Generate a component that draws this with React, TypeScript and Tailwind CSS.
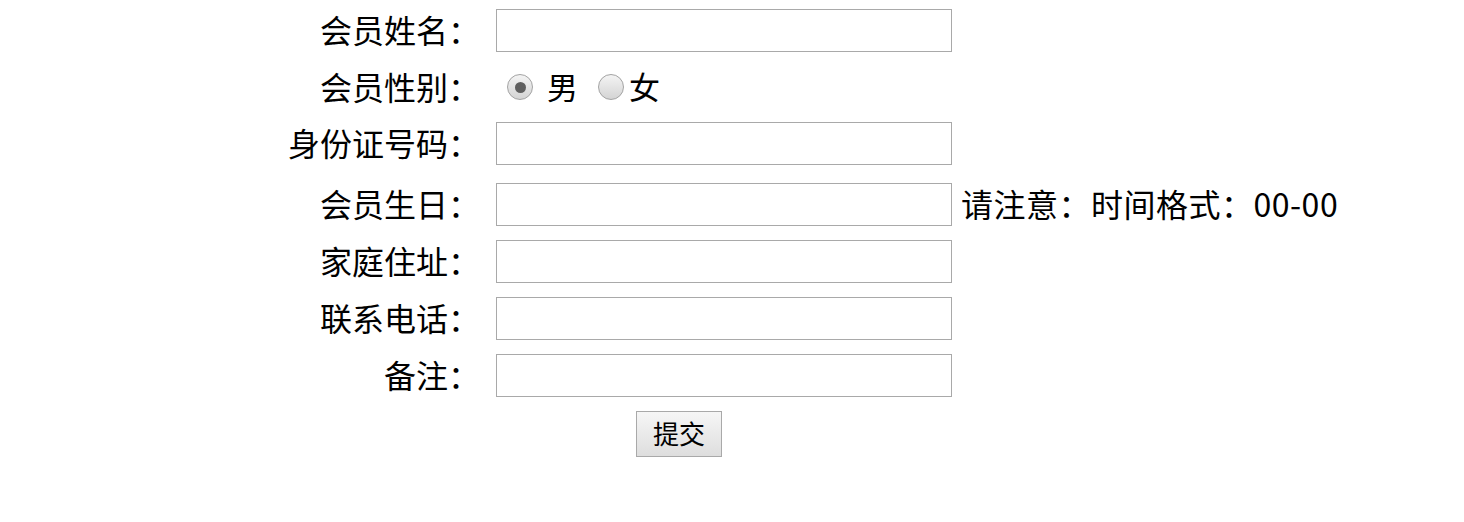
import type { ReactNode } from "react";

const font = { fontFamily: '"Noto Sans CJK SC", "Noto Sans", sans-serif' };

function Label({ children }: { children: ReactNode }) {
  return (
    <div className="w-[480px] shrink-0 pb-[3px] text-right text-[32px] leading-none text-black">
      {children}
    </div>
  );
}

function TextInput() {
  return (
    <input
      type="text"
      className="ml-[16px] h-[43px] w-[456px] shrink-0 border border-[#a9a9a9] bg-white px-1 outline-none"
    />
  );
}

function Radio({ checked }: { checked?: boolean }) {
  return (
    <span className="flex h-[26px] w-[26px] items-center justify-center rounded-full border border-[#a3a3a3] bg-gradient-to-b from-[#f4f4f4] to-[#d4d4d4]">
      {checked && <span className="h-[11px] w-[11px] rounded-full bg-[#5f5f5f]" />}
    </span>
  );
}

function Row({ label, extra }: { label: string; extra?: ReactNode }) {
  return (
    <div className="flex h-[43px] items-center">
      <Label>{label}</Label>
      <TextInput />
      {extra}
    </div>
  );
}

export default function App() {
  return (
    <div className="min-h-[522px] bg-white pt-[9px]" style={font}>
      <div className="flex flex-col gap-[14px]">
        <Row label="会员姓名：" />
        <div className="flex h-[42px] items-center">
          <Label>会员性别：</Label>
          <div className="ml-[27px] flex items-center text-[31px] leading-none">
            <Radio checked />
            <span className="ml-[14px] pb-[3px]">男</span>
            <span className="ml-[20px]">
              <Radio />
            </span>
            <span className="ml-[5px] pb-[3px]">女</span>
          </div>
        </div>
        <Row label="身份证号码：" />
        <div className="mt-[4px]">
          <Row
            label="会员生日："
            extra={
              <span className="ml-[9px] whitespace-nowrap pb-[4px] text-[32px] leading-none tracking-[0.5px]">
                请注意：时间格式：00-00
              </span>
            }
          />
        </div>
        <Row label="家庭住址：" />
        <Row label="联系电话：" />
        <Row label="备注：" />
        <div className="flex">
          <button
            type="button"
            className="ml-[636px] h-[46px] w-[86px] border border-[#a9a9a9] bg-gradient-to-b from-[#f6f6f6] to-[#dedede] pb-[2px] text-[26px] leading-none text-black"
          >
            提交
          </button>
        </div>
      </div>
    </div>
  );
}
